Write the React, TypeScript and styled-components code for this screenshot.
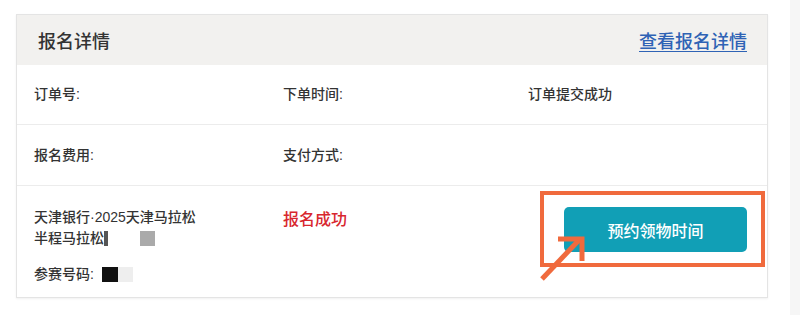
import React from 'react';
import styled, { createGlobalStyle } from 'styled-components';

const GlobalStyle = createGlobalStyle`
  html, body {
    margin: 0;
    padding: 0;
    background: #fff;
    font-family: "Liberation Sans", "Noto Sans CJK SC", sans-serif;
    font-weight: 500;
    color: #333;
  }
`;

const Page = styled.div`
  position: relative;
  width: 800px;
  height: 315px;
  padding: 14px 0 0 16px;
  box-sizing: border-box;
  overflow: hidden;
`;

const SideShade = styled.div`
  position: absolute;
  top: 0;
  right: 0;
  width: 10px;
  height: 100%;
  background: #f6f6f6;
`;

const Card = styled.div`
  width: 752px;
  border: 1px solid #e4e4e4;
  box-shadow: 0 1px 2px rgba(0, 0, 0, 0.06);
  background: #fff;
  box-sizing: border-box;
`;

const Header = styled.div`
  height: 50px;
  background: #f2f1ef;
  display: flex;
  align-items: center;
  justify-content: space-between;
  padding: 0 20px 0 21px;
`;

const Title = styled.div`
  font-size: 18px;
  color: #333;
`;

const DetailLink = styled.a`
  font-size: 18px;
  color: #2f63b5;
  text-decoration: underline;
  text-underline-offset: 3px;
  cursor: pointer;
`;

const Row = styled.div<{ $height: number; $last?: boolean }>`
  display: grid;
  grid-template-columns: 249px 245px 1fr;
  height: ${p => p.$height}px;
  padding-left: 17px;
  border-bottom: ${p => (p.$last ? 'none' : '1px solid #ececec')};
  box-sizing: border-box;
`;

const Cell = styled.div`
  display: flex;
  align-items: center;
  padding-bottom: 3px;
  font-size: 14px;
  color: #333;
`;

const TopCell = styled.div`
  padding-top: 21px;
  font-size: 14px;
  line-height: 21px;
  color: #333;
`;

const Blur = styled.span<{ $color: string; $w: number }>`
  display: inline-block;
  width: ${p => p.$w}px;
  height: 15px;
  background: ${p => p.$color};
  vertical-align: -3px;
  filter: blur(0.6px);
`;

const NumberLine = styled.div`
  margin-top: 15px;
  display: flex;
  align-items: center;
`;

const Status = styled.div`
  padding-top: 20px;
  font-size: 16px;
  color: #d8262e;
`;

const ActionCell = styled.div`
  position: relative;
  padding: 21px 0 0 36px;
`;

const ReserveButton = styled.button`
  width: 183px;
  height: 45px;
  border: none;
  border-radius: 5px;
  background: #119fb6;
  color: #fff;
  font-family: inherit;
  font-weight: inherit;
  font-size: 16px;
  cursor: pointer;
`;

const Highlight = styled.div`
  position: absolute;
  left: 12px;
  top: 5px;
  width: 225px;
  height: 76px;
  border: 4px solid #f06a3d;
  box-sizing: border-box;
  pointer-events: none;
`;

const Arrow = styled.svg`
  position: absolute;
  left: 8px;
  top: 46px;
  overflow: visible;
  pointer-events: none;
`;

export default function App() {
  return (
    <>
      <GlobalStyle />
      <Page>
        <SideShade />
        <Card>
          <Header>
            <Title>报名详情</Title>
            <DetailLink>查看报名详情</DetailLink>
          </Header>
          <Row $height={60}>
            <Cell>订单号:</Cell>
            <Cell>下单时间:</Cell>
            <Cell>订单提交成功</Cell>
          </Row>
          <Row $height={61}>
            <Cell>报名费用:</Cell>
            <Cell>支付方式:</Cell>
            <Cell />
          </Row>
          <Row $height={111} $last>
            <TopCell>
              <div>天津银行·2025天津马拉松</div>
              <div>
                半程马拉松
                <Blur $color="#555" $w={4} style={{ marginRight: 32 }} />
                <Blur $color="#aaa" $w={15} />
              </div>
              <NumberLine>
                参赛号码:
                <Blur $color="#111" $w={16} style={{ marginLeft: 8 }} />
                <Blur $color="#eee" $w={15} />
              </NumberLine>
            </TopCell>
            <Status>报名成功</Status>
            <ActionCell>
              <ReserveButton>预约领物时间</ReserveButton>
              <Highlight />
              <Arrow width="50" height="50" viewBox="0 0 50 50">
                <g stroke="#f06a3d" strokeWidth="5" fill="none">
                  <line x1="6" y1="47" x2="44" y2="7" />
                  <polyline points="22,7 46,7 46,29" />
                </g>
              </Arrow>
            </ActionCell>
          </Row>
        </Card>
      </Page>
    </>
  );
}
